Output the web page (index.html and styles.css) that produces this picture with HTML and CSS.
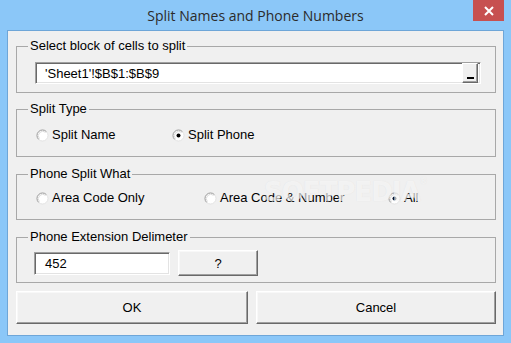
FILE: index.html
```html
<!DOCTYPE html>
<html>
<head>
<meta charset="utf-8">
<link rel="stylesheet" href="styles.css">
</head>
<body>
<div class="window">
  <div class="titlebar">
    <span class="title">Split Names and Phone Numbers</span>
    <div class="close"><svg width="10" height="10" viewBox="0 0 10 10"><path d="M1 1L9 9M9 1L1 9" stroke="#fff" stroke-width="2"/></svg></div>
  </div>
  <div class="client">
    <fieldset class="group g1">
      <legend>Select block of cells to split</legend>
      <div class="body">
        <div class="field refedit"><span class="val">'Sheet1'!$B$1:$B$9</span><span class="refbtn"><span class="dash"></span></span></div>
      </div>
    </fieldset>
    <fieldset class="group g2">
      <legend>Split Type</legend>
      <div class="body row">
        <label class="radio r-name"><svg class="rb" width="13" height="13" viewBox="0 0 13 13"><circle cx="6.5" cy="6.5" r="5.5" fill="#fff" stroke="#e3e3e3"/><path d="M2.6 10.4A5.5 5.5 0 0 1 10.4 2.6" fill="none" stroke="#a0a0a0"/><path d="M3.4 9.6A4.4 4.4 0 0 1 9.6 3.4" fill="none" stroke="#dcdcdc"/></svg>Split Name</label>
        <label class="radio"><svg class="rb" width="13" height="13" viewBox="0 0 13 13"><circle cx="6.5" cy="6.5" r="5.5" fill="#fff" stroke="#e3e3e3"/><path d="M2.6 10.4A5.5 5.5 0 0 1 10.4 2.6" fill="none" stroke="#a0a0a0"/><path d="M3.4 9.6A4.4 4.4 0 0 1 9.6 3.4" fill="none" stroke="#dcdcdc"/><circle cx="6.5" cy="6.5" r="2" fill="#000"/></svg>Split Phone</label>
      </div>
    </fieldset>
    <fieldset class="group g3">
      <legend>Phone Split What</legend>
      <div class="body row">
        <label class="radio r-only"><svg class="rb" width="13" height="13" viewBox="0 0 13 13"><circle cx="6.5" cy="6.5" r="5.5" fill="#fff" stroke="#e3e3e3"/><path d="M2.6 10.4A5.5 5.5 0 0 1 10.4 2.6" fill="none" stroke="#a0a0a0"/><path d="M3.4 9.6A4.4 4.4 0 0 1 9.6 3.4" fill="none" stroke="#dcdcdc"/></svg>Area Code Only</label>
        <label class="radio r-num"><svg class="rb" width="13" height="13" viewBox="0 0 13 13"><circle cx="6.5" cy="6.5" r="5.5" fill="#fff" stroke="#e3e3e3"/><path d="M2.6 10.4A5.5 5.5 0 0 1 10.4 2.6" fill="none" stroke="#a0a0a0"/><path d="M3.4 9.6A4.4 4.4 0 0 1 9.6 3.4" fill="none" stroke="#dcdcdc"/></svg>Area Code &amp; Number</label>
        <label class="radio"><svg class="rb" width="13" height="13" viewBox="0 0 13 13"><circle cx="6.5" cy="6.5" r="5.5" fill="#fff" stroke="#e3e3e3"/><path d="M2.6 10.4A5.5 5.5 0 0 1 10.4 2.6" fill="none" stroke="#a0a0a0"/><path d="M3.4 9.6A4.4 4.4 0 0 1 9.6 3.4" fill="none" stroke="#dcdcdc"/><circle cx="6.5" cy="6.5" r="2" fill="#000"/></svg>All</label>
      </div>
    </fieldset>
    <fieldset class="group g4">
      <legend>Phone Extension Delimeter</legend>
      <div class="body row4">
        <div class="field ext"><span class="val">452</span></div>
        <div class="btn qbtn">?</div>
      </div>
    </fieldset>
    <div class="buttons">
      <div class="btn ok">OK</div>
      <div class="btn cancel">Cancel</div>
    </div>
    <span class="watermark">SOFTPEDIA<sup>®</sup></span>
  </div>
</div>
</body>
</html>
```
FILE: styles.css
```css
* { box-sizing: border-box; }
html, body { margin: 0; padding: 0; }
body {
  width: 511px;
  height: 343px;
  overflow: hidden;
  font-family: "Liberation Sans", Arial, sans-serif;
  font-size: 13px;
  color: #000;
}
.window {
  width: 511px;
  height: 343px;
  background: #8bc7f8;
  padding: 0 7px 7px 7px;
  display: flex;
  flex-direction: column;
}
.titlebar {
  height: 30px;
  display: grid;
  grid-template-columns: 1fr auto 1fr;
  margin: 0 -7px;
  padding: 0 7px;
}
.title {
  grid-column: 2;
  font-family: "Open Sans", "Noto Sans", sans-serif;
  font-size: 14px;
  color: #2b2b2b;
  line-height: 31px;
}
.close {
  grid-column: 3;
  justify-self: end;
  align-self: start;
  width: 31px;
  height: 21px;
  background: #c75050;
  display: flex;
  align-items: center;
  justify-content: center;
}
.client {
  flex: 1;
  position: relative;
  background: #f0f0f0;
  border: 1px solid #6ea6d8;
  padding: 7px 7px 0 8px;
  display: flex;
  flex-direction: column;
}
.group {
  margin: 0;
  padding: 0;
  border: 1px solid #a8a8a8;
  min-width: 0;
}
.group legend {
  margin-left: 11px;
  padding: 0 2px;
  line-height: 16px;
  font-size: 13px;
}
.g2 { margin-top: 8px; }
.g3 { margin-top: 9px; }
.g4 { margin-top: 9px; }
.g1 .body { padding: 8px 14px 8px 18px; }
.row {
  display: flex;
  align-items: center;
  height: 16px;
  box-sizing: content-box;
  padding: 10px 0 13px 19px;
}
.g3 .row { padding: 8px 0 13px 19px; }
.radio {
  display: inline-flex;
  align-items: center;
  gap: 3px;
  line-height: 16px;
}
.rb { flex: none; }
.r-name { width: 136px; }
.r-only { width: 168px; }
.r-num { width: 184px; }
.field {
  background: #fff;
  border: 1px solid;
  border-color: #a0a0a0 #fff #fff #a0a0a0;
  box-shadow: inset 1px 1px 0 #696969, inset -1px -1px 0 #e3e3e3;
  display: flex;
  align-items: center;
}
.refedit {
  height: 22px;
  padding: 0 2px 0 9px;
}
.refedit .val { flex: 1; }
.refbtn {
  width: 16px;
  height: 20px;
  background: #f0f0f0;
  border: 1px solid;
  border-color: #fff #696969 #696969 #fff;
  box-shadow: inset -1px -1px 0 #a0a0a0;
  display: flex;
  align-items: flex-end;
  justify-content: center;
  padding-bottom: 3px;
}
.dash { width: 7px; height: 2px; background: #000; }
.row4 {
  display: flex;
  align-items: center;
  padding: 5px 0 6px 17px;
}
.ext {
  width: 136px;
  height: 23px;
  padding-left: 10px;
}
.btn {
  background: #f0f0f0;
  border: 1px solid;
  border-color: #fff #696969 #696969 #fff;
  box-shadow: inset -1px -1px 0 #a0a0a0, inset 1px 1px 0 #f8f8f8;
  display: flex;
  align-items: center;
  justify-content: center;
}
.qbtn {
  width: 80px;
  height: 26px;
  margin-left: 8px;
}
.buttons {
  display: flex;
  gap: 8px;
  margin-top: 8px;
}
.ok { width: 232px; height: 33px; }
.cancel { width: 240px; height: 33px; }
.watermark {
  position: absolute;
  left: 256px;
  top: 146px;
  font-family: "DejaVu Sans", sans-serif;
  font-weight: bold;
  font-size: 26px;
  letter-spacing: -1px;
  color: rgba(255, 255, 255, 0.6);
  text-shadow: 0 0 1px rgba(180, 180, 180, 0.25);
  pointer-events: none;
}
.watermark sup { font-size: 8px; vertical-align: top; font-weight: normal; }
```
